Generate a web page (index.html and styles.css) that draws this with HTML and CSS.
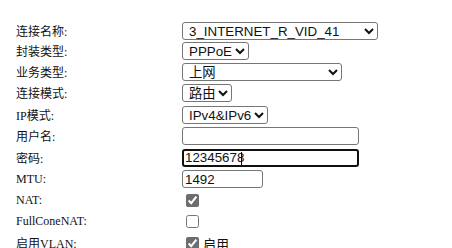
FILE: index.html
```html
<!DOCTYPE html>
<html lang="zh-CN">
<head>
    <meta charset="UTF-8" />
    <title>WAN 连接</title>
    <link rel="stylesheet" href="styles.css">
</head>
<body>
    <div class="form">
        <div class="row first">
            <span class="label">连接名称:</span>
            <select class="sel-name">
                <option>3_INTERNET_R_VID_41</option>
            </select>
        </div>
        <div class="row">
            <span class="label">封装类型:</span>
            <select class="sel-mode">
                <option>PPPoE</option>
            </select>
        </div>
        <div class="row">
            <span class="label">业务类型:</span>
            <select class="sel-service">
                <option>上网</option>
            </select>
        </div>
        <div class="row">
            <span class="label">连接模式:</span>
            <select class="sel-conn">
                <option>路由</option>
            </select>
        </div>
        <div class="row">
            <span class="label">IP模式:</span>
            <select class="sel-ip">
                <option>IPv4&amp;IPv6</option>
            </select>
        </div>
        <div class="row">
            <span class="label">用户名:</span>
            <input type="text" class="txt-long" value="">
        </div>
        <div class="row">
            <span class="label">密码:</span>
            <div class="focus-wrap">
                <input type="text" class="txt-long focused" value="12345678">
                <span class="caret"></span>
            </div>
        </div>
        <div class="row">
            <span class="label">MTU:</span>
            <input type="text" class="txt-short" value="1492">
        </div>
        <div class="row">
            <span class="label">NAT:</span>
            <input type="checkbox" checked>
        </div>
        <div class="row">
            <span class="label">FullConeNAT:</span>
            <input type="checkbox">
        </div>
        <div class="row">
            <span class="label">启用VLAN:</span>
            <label class="check-text"><input type="checkbox" checked>启用</label>
        </div>
    </div>
</body>
</html>
```

FILE: styles.css
```css
body {
    margin: 0;
    background: #ffffff;
    font-family: 'Liberation Serif', 'Noto Sans CJK SC', serif;
    color: #111111;
    overflow: hidden;
}

.form {
    padding: 21px 0 0 16px;
}

.row {
    display: flex;
    align-items: center;
    height: 21.4px;
}

.row.first {
    height: 19px;
}

.label {
    width: 166px;
    flex: none;
    font-size: 12px;
}

select,
input[type="text"] {
    font-family: 'Liberation Sans', 'Noto Sans CJK SC', sans-serif;
    font-size: 13.33px;
    color: #111111;
    background: #ffffff;
    border: 1px solid #767676;
    border-radius: 3px;
    box-sizing: border-box;
    height: 18px;
    margin: 0;
}

select {
    padding: 0 0 0 2px;
}

.sel-name { width: 196px; }
.sel-mode { width: 67px; }
.sel-service { width: 160px; }
.sel-conn { width: 50px; }
.sel-ip { width: 86px; }

input[type="text"] {
    padding: 0 2px;
    outline: none;
}

.txt-long { width: 177px; }
.txt-short { width: 81px; height: 19px; }

.focus-wrap {
    position: relative;
    display: flex;
}

input.focused {
    border: 2px solid #101010;
    padding: 0 1px;
}

.caret {
    position: absolute;
    left: 59px;
    top: 3px;
    width: 1px;
    height: 13px;
    background: #000000;
}

input[type="checkbox"] {
    width: 13px;
    height: 13px;
    margin: 0 0 0 4px;
    accent-color: #6d6d6d;
}

.check-text {
    display: flex;
    align-items: center;
    gap: 4px;
    font-family: 'Noto Sans CJK SC', sans-serif;
    font-size: 13px;
}
```
